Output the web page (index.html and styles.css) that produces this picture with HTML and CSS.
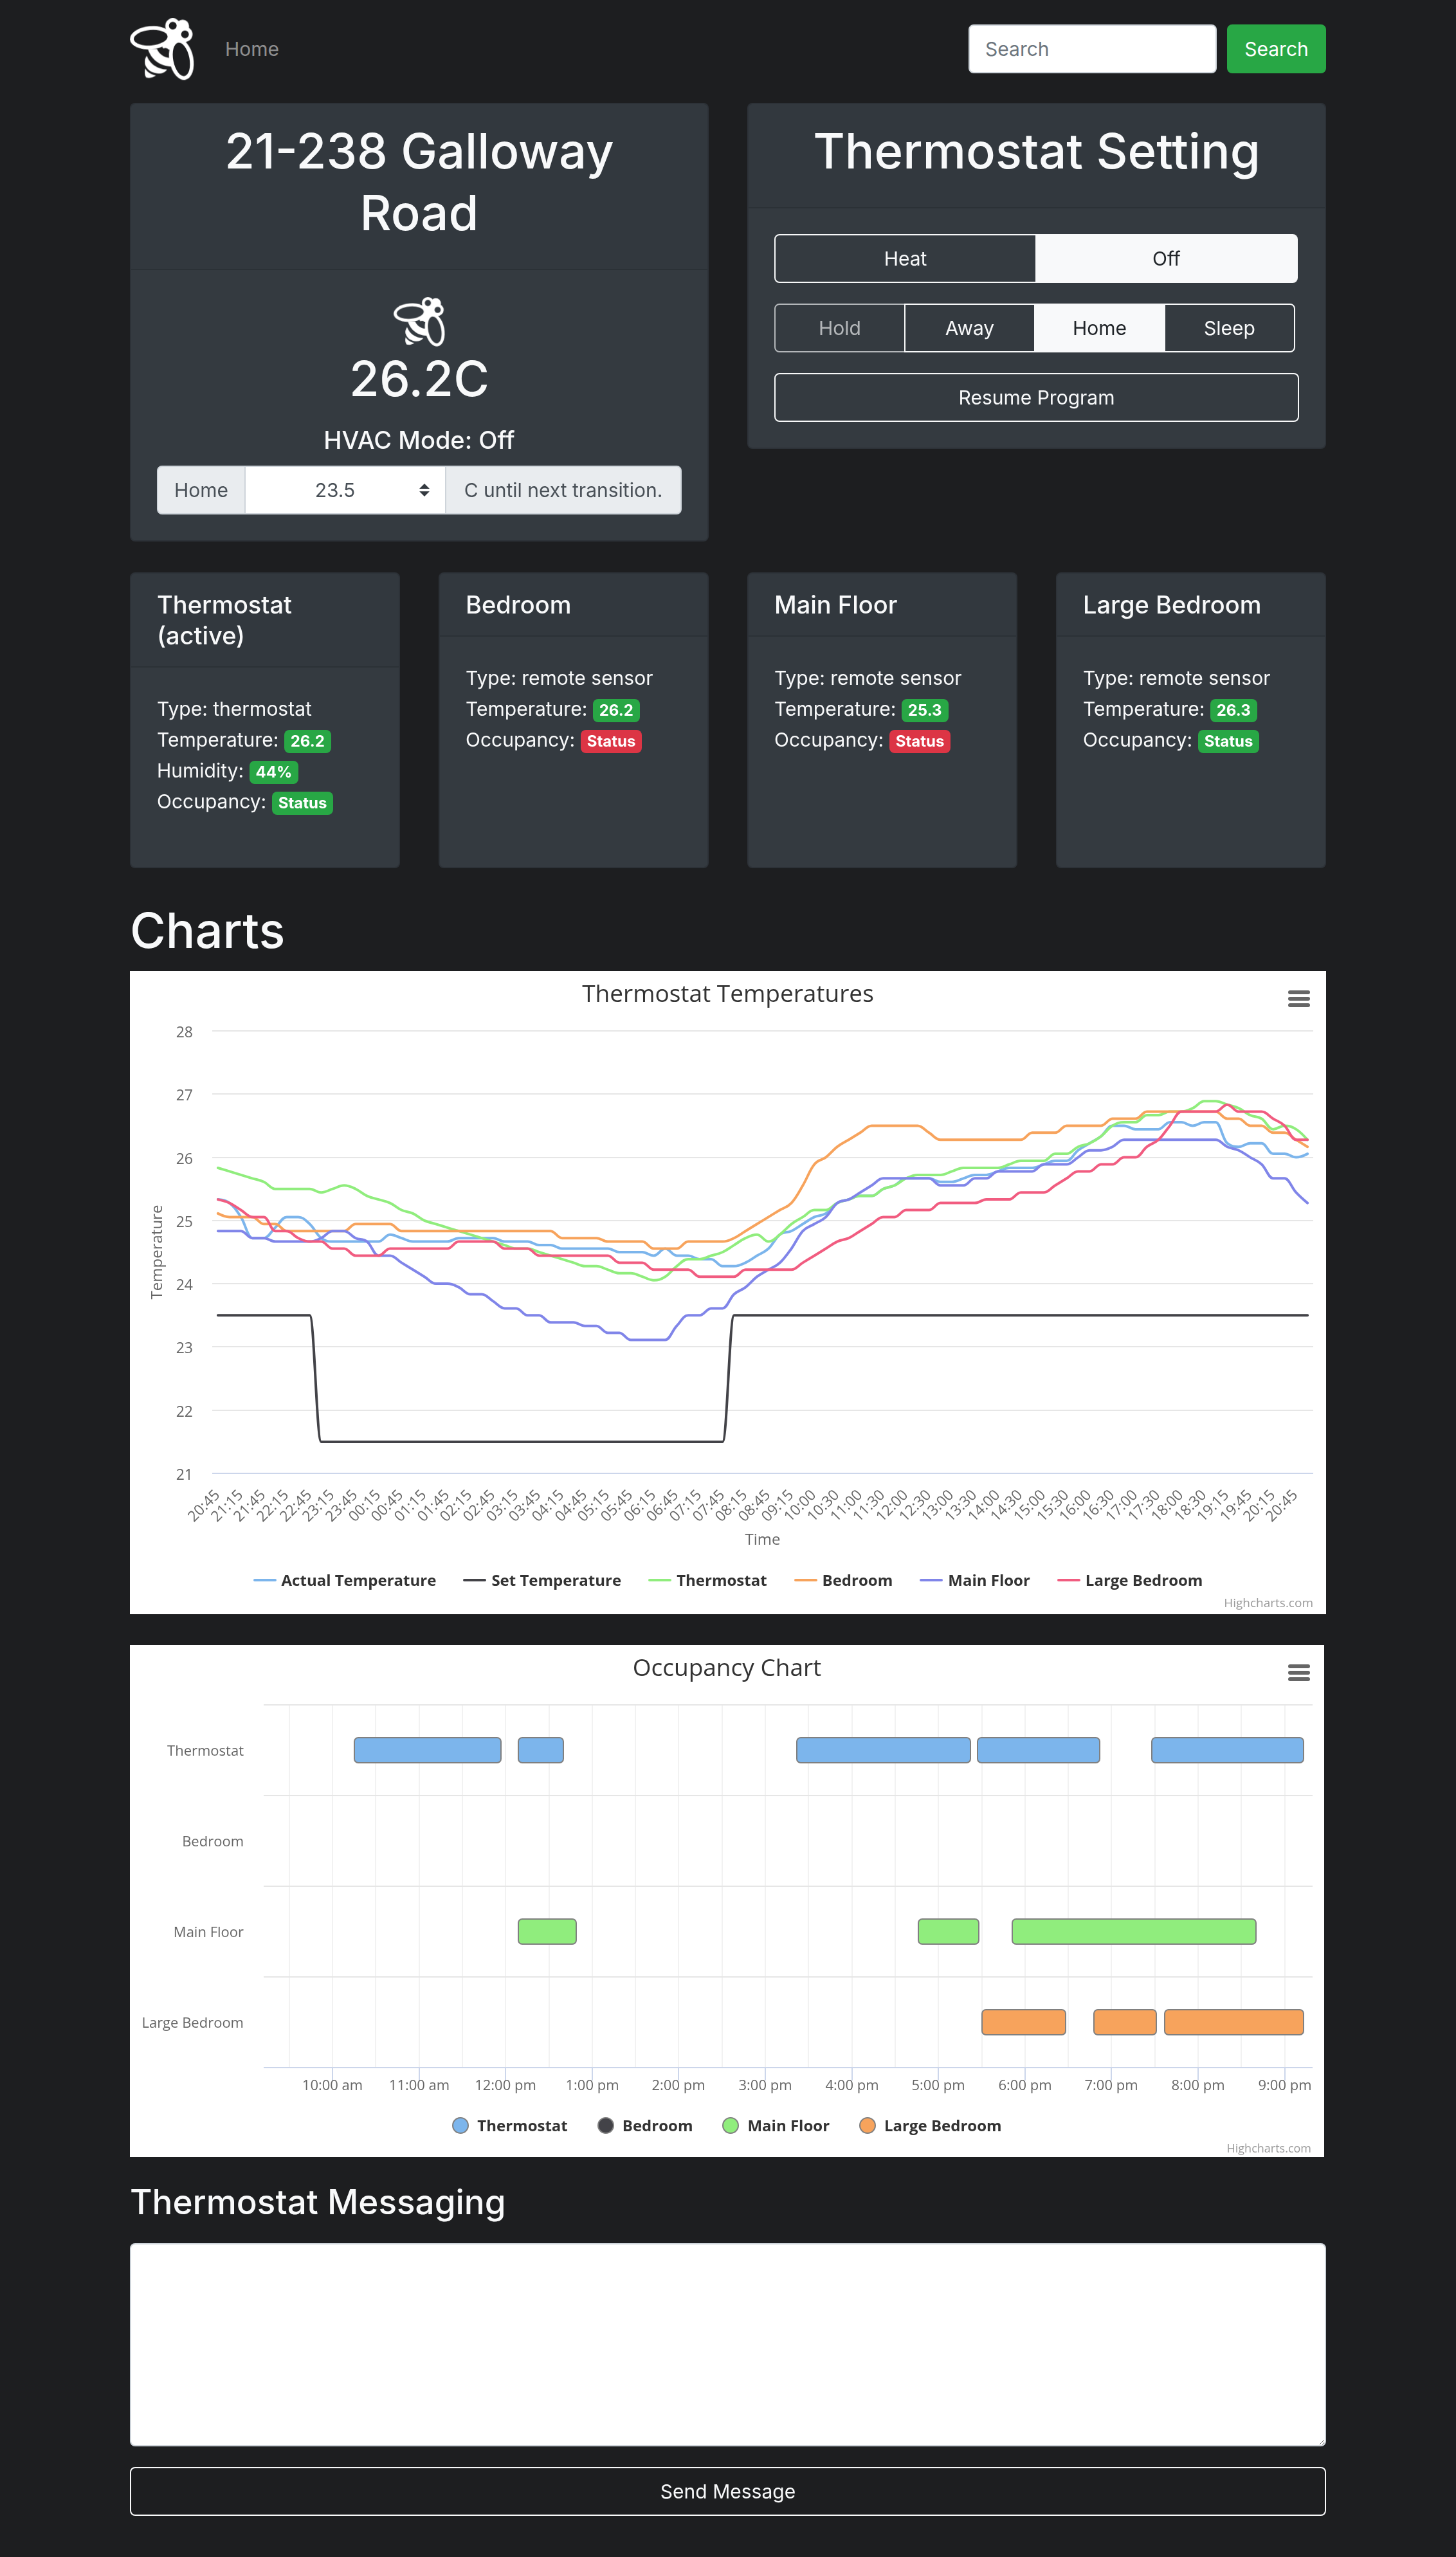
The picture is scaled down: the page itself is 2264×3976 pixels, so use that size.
FILE: index.html
```html
<!DOCTYPE html>
<html lang="en">
<head>
  <meta charset="utf-8">
  <meta name="viewport" content="width=device-width, initial-scale=1">
  <title>21-238 Galloway Road</title>
  <link rel="stylesheet" href="styles.css">
</head>
<body>
  <svg class="sprite" aria-hidden="true">
    <symbol id="bee" viewBox="36 46 300 300">
      <mask id="bee-holes" maskUnits="userSpaceOnUse" x="0" y="0" width="400" height="400">
        <rect width="400" height="400" fill="#fff"/>
        <ellipse cx="133" cy="144" rx="79" ry="36" transform="rotate(-5 133 144)"/>
        <ellipse cx="276" cy="245" rx="38" ry="79" transform="rotate(-11 276 245)"/>
        <circle cx="236" cy="88" r="18"/>
        <circle cx="293" cy="128" r="18"/>
      </mask>
      <g mask="url(#bee-holes)" fill="#fff">
        <ellipse cx="133" cy="144" rx="97" ry="54" transform="rotate(-5 133 144)"/>
        <ellipse cx="276" cy="245" rx="56" ry="97" transform="rotate(-11 276 245)"/>
        <circle cx="236" cy="88" r="35"/>
        <circle cx="293" cy="128" r="35"/>
        <circle cx="282" cy="90" r="30"/>
        <path d="M202 96L260 66L312 96L300 163L262 172L232 200L217 199Q207 187 192 194L186 186L214 150Z"/>
        <path d="M120 196C134 245 178 278 232 278L222 238C196 236 172 220 162 196Z"/>
        <path d="M115 228C126 262 162 292 209 292C192 320 142 314 120 291C102 272 100 248 115 228Z"/>
        <path d="M107 287C116 303 132 315 157 320C142 332 124 333 112 330C104 318 103 301 107 287Z"/>
      </g>
    </symbol>
  </svg>

  <div class="container">
    <header class="navbar">
      <a class="brand" href="#" aria-label="Dashboard"><svg class="bee"><use href="#bee"/></svg></a>
      <nav><a class="nav-link" href="#">Home</a></nav>
      <form class="search" role="search">
        <input class="field" type="search" placeholder="Search" aria-label="Search">
        <button class="btn btn-success" type="submit">Search</button>
      </form>
    </header>

    <main>
      <section class="grid halves">
        <article class="card">
          <header class="card-header centered"><h1>21-238 Galloway<br>Road</h1></header>
          <div class="card-body centered">
            <svg class="bee-small" aria-hidden="true"><use href="#bee"/></svg>
            <p class="reading">26.2C</p>
            <h5 class="mode">HVAC Mode: Off</h5>
            <div class="input-group">
              <label class="addon" for="target">Home</label>
              <select id="target" class="select">
                <option>23.0</option>
                <option selected>23.5</option>
                <option>24.0</option>
              </select>
              <span class="addon">C until next transition.</span>
            </div>
          </div>
        </article>

        <article class="card">
          <header class="card-header centered"><h1>Thermostat Setting</h1></header>
          <div class="card-body stack">
            <div class="btn-group two" role="group" aria-label="HVAC mode">
              <button class="btn btn-outline" type="button">Heat</button>
              <button class="btn btn-outline active" type="button" aria-pressed="true">Off</button>
            </div>
            <div class="btn-group four" role="group" aria-label="Comfort setting">
              <button class="btn btn-outline" type="button" disabled>Hold</button>
              <button class="btn btn-outline" type="button">Away</button>
              <button class="btn btn-outline active" type="button" aria-pressed="true">Home</button>
              <button class="btn btn-outline" type="button">Sleep</button>
            </div>
            <button class="btn btn-outline block" type="button">Resume Program</button>
          </div>
        </article>
      </section>

      <section class="grid quarters">
        <article class="card">
          <header class="card-header"><h5>Thermostat (active)</h5></header>
          <ul class="card-body facts">
            <li>Type: thermostat</li>
            <li>Temperature: <span class="badge ok">26.2</span></li>
            <li>Humidity: <span class="badge ok">44%</span></li>
            <li>Occupancy: <span class="badge ok">Status</span></li>
          </ul>
        </article>
        <article class="card">
          <header class="card-header"><h5>Bedroom</h5></header>
          <ul class="card-body facts">
            <li>Type: remote sensor</li>
            <li>Temperature: <span class="badge ok">26.2</span></li>
            <li>Occupancy: <span class="badge off">Status</span></li>
          </ul>
        </article>
        <article class="card">
          <header class="card-header"><h5>Main Floor</h5></header>
          <ul class="card-body facts">
            <li>Type: remote sensor</li>
            <li>Temperature: <span class="badge ok">25.3</span></li>
            <li>Occupancy: <span class="badge off">Status</span></li>
          </ul>
        </article>
        <article class="card">
          <header class="card-header"><h5>Large Bedroom</h5></header>
          <ul class="card-body facts">
            <li>Type: remote sensor</li>
            <li>Temperature: <span class="badge ok">26.3</span></li>
            <li>Occupancy: <span class="badge ok">Status</span></li>
          </ul>
        </article>
      </section>

      <section>
        <h1 class="section-title">Charts</h1>

        <figure class="chart">
          <figcaption>Thermostat Temperatures</figcaption>
          <button class="chart-menu" type="button" aria-label="Chart menu"><i></i><i></i><i></i></button>
          <svg id="temperatures" class="plot" viewBox="0 58 1860 862" role="img" aria-label="Thermostat temperatures by time"></svg>
          <ul class="legend lines">
            <li><i class="blue"></i>Actual Temperature</li>
            <li><i class="black"></i>Set Temperature</li>
            <li><i class="green"></i>Thermostat</li>
            <li><i class="orange"></i>Bedroom</li>
            <li><i class="purple"></i>Main Floor</li>
            <li><i class="red"></i>Large Bedroom</li>
          </ul>
          <a class="credits" href="#">Highcharts.com</a>
        </figure>

        <figure class="chart occupancy">
          <figcaption>Occupancy Chart</figcaption>
          <button class="chart-menu" type="button" aria-label="Chart menu"><i></i><i></i><i></i></button>
          <svg id="occupancy" class="plot" viewBox="0 58 1857 652" role="img" aria-label="Occupancy by room and time"></svg>
          <ul class="legend dots">
            <li><i class="blue"></i>Thermostat</li>
            <li><i class="black"></i>Bedroom</li>
            <li><i class="green"></i>Main Floor</li>
            <li><i class="orange"></i>Large Bedroom</li>
          </ul>
          <a class="credits" href="#">Highcharts.com</a>
        </figure>
      </section>

      <form class="messaging">
        <h3><label for="message">Thermostat Messaging</label></h3>
        <textarea id="message" class="field"></textarea>
        <button class="btn btn-outline block" type="submit">Send Message</button>
      </form>
    </main>
  </div>
  <script src="charts.js"></script>
</body>
</html>
```

FILE: styles.css
```css
* { box-sizing: border-box; }

body {
  margin: 0;
  background: #1d1e20;
  color: #f8f9fa;
  font: 400 30px/48px Inter, "Liberation Sans", sans-serif;
}

h1, h3, h5, p, ul, figure { margin: 0; padding: 0; }
ul { list-style: none; }
h1, .reading { font-size: 76px; line-height: 96px; font-weight: 500; }
h3 { font-size: 53px; line-height: 68px; font-weight: 500; }
h5 { font-size: 38px; line-height: 48px; font-weight: 500; }
button, input, select, textarea { font: inherit; }
.sprite { position: absolute; width: 0; height: 0; }

.container { max-width: 1920px; margin: 0 auto; padding: 0 30px 64px; }

/* Navigation */
.navbar { display: flex; align-items: center; padding: 26px 0 34px; }
.brand { display: flex; }
.bee { width: 100px; height: 100px; }
.nav-link { margin-left: 48px; color: rgba(255, 255, 255, .5); text-decoration: none; }
.search { display: flex; gap: 16px; margin-left: auto; }
.search .field { width: 386px; }

/* Controls */
.field {
  padding: 12px 24px;
  border: 2px solid #ced4da;
  border-radius: 8px;
  background: #fff;
  color: #495057;
}
.field::placeholder { color: #6c757d; opacity: 1; }
.btn {
  padding: 12px 24px;
  border: 2px solid transparent;
  border-radius: 8px;
  background: none;
  color: #f8f9fa;
}
.btn-success { min-width: 154px; background: #28a745; border-color: #28a745; color: #fff; }
.btn-outline { border-color: #f8f9fa; }
.btn-outline.active { background: #f8f9fa; color: #212529; }
.btn:disabled { opacity: .65; }
.block { width: 100%; }

.btn-group { display: flex; }
.btn-group .btn + .btn { margin-left: -2px; border-top-left-radius: 0; border-bottom-left-radius: 0; }
.btn-group .btn:not(:last-child) { border-top-right-radius: 0; border-bottom-right-radius: 0; }
.two .btn { width: 50%; flex: none; }
.four .btn { width: 25%; flex: none; }

.input-group { display: grid; grid-template-columns: 138px 1fr 368px; }
.addon {
  padding: 12px 0;
  border: 2px solid #ced4da;
  background: #e9ecef;
  color: #495057;
  text-align: center;
  white-space: nowrap;
}
.addon:first-child { border-radius: 8px 0 0 8px; }
.addon:last-child { border-radius: 0 8px 8px 0; }
.select {
  min-width: 0;
  margin: 0 -2px;
  padding: 12px 56px 12px 24px;
  border: 2px solid #ced4da;
  border-radius: 0;
  appearance: none;
  color: #495057;
  text-align: center;
  text-align-last: center;
  background: #fff url("data:image/svg+xml,%3Csvg xmlns='http://www.w3.org/2000/svg' viewBox='0 0 4 5'%3E%3Cpath fill='%23343a40' d='M2 0L0 2h4zm0 5L0 3h4z'/%3E%3C/svg%3E") no-repeat right 24px center / 16px 20px;
}

/* Cards */
.grid { display: grid; gap: 60px; margin-bottom: 48px; }
.halves { grid-template-columns: 1fr 1fr; align-items: start; }
.quarters { grid-template-columns: repeat(4, 1fr); }
.card {
  border: 2px solid rgba(0, 0, 0, .125);
  border-radius: 8px;
  background: #343a40;
}
.card-header {
  padding: 24px 40px;
  background: rgba(0, 0, 0, .03);
  border-bottom: 2px solid rgba(0, 0, 0, .125);
}
.card-header h1 { margin-bottom: 16px; }
.card-body { padding: 40px; }
.centered { text-align: center; }
.stack { display: grid; gap: 32px; }
.bee-small { display: block; width: 80px; height: 80px; margin: 0 auto; }
.mode { margin: 24px 0 16px; }
.facts { padding-bottom: 78px; }

.badge {
  display: inline-block;
  padding: 6px 10px;
  border-radius: 8px;
  font-size: 24px;
  line-height: 24px;
  font-weight: 700;
  color: #fff;
}
.ok { background: #28a745; }
.off { background: #dc3545; }

/* Charts */
.section-title { margin-bottom: 16px; }
.chart {
  position: relative;
  padding: 10px 0 6px;
  background: #fff;
  color: #333;
  font-family: "Open Sans", "Noto Sans", sans-serif;
  margin-bottom: 48px;
}
.occupancy { margin: 0 3px 36px 0; padding-bottom: 2px; }
.chart figcaption { font-size: 37px; line-height: 48px; text-align: center; }
.chart-menu {
  position: absolute;
  top: 20px;
  right: 15px;
  display: grid;
  gap: 4px;
  align-content: center;
  width: 54px;
  height: 46px;
  padding: 0 10px;
  border: 0;
  background: none;
}
.occupancy .chart-menu { right: 12px; }
.chart-menu i { height: 6px; border-radius: 3px; background: #666; }
.plot { display: block; width: 100%; height: auto; font-size: 22px; }
#temperatures { font-size: 23px; }
.plot text { fill: #666; }
.plot .axis-title { font-size: 24px; }
.grid-line { stroke: #e6e6e6; stroke-width: 2; }
.minor-line { stroke: #f2f2f2; stroke-width: 2; }
.axis-line { stroke: #ccd6eb; stroke-width: 2; }
.series { fill: none; stroke-width: 4; stroke-linecap: round; stroke-linejoin: round; }
.bar { stroke: #808080; stroke-width: 2; }

.legend { display: flex; flex-wrap: wrap; justify-content: center; gap: 0 42px; margin-top: 11px; font-size: 24px; line-height: 32px; font-weight: 700; }
.dots { gap: 0 46px; margin-top: 21px; }
.legend li { display: flex; align-items: center; }
.lines i { width: 36px; height: 4px; margin-right: 8px; border-radius: 2px; }
.dots i { width: 26px; height: 26px; margin-right: 13px; border: 2px solid #808080; border-radius: 50%; }
.blue { background: #7cb5ec; }
.black { background: #434348; }
.green { background: #90ed7d; }
.orange { background: #f7a35c; }
.purple { background: #8085e9; }
.red { background: #f15c80; }
.credits { display: block; margin: 7px 20px 0 0; color: #999; font-size: 19px; line-height: 24px; text-align: right; text-decoration: none; }
.occupancy .credits { font-size: 18px; }

/* Messaging */
.messaging { display: grid; }
.messaging h3 { margin-bottom: 30px; }
.messaging textarea { height: 316px; margin-bottom: 32px; resize: vertical; }
```

FILE: charts.js
```js
(function () {
  var NS = 'http://www.w3.org/2000/svg';

  function add(parent, name, attrs, text) {
    var el = document.createElementNS(NS, name);
    for (var key in attrs) el.setAttribute(key, attrs[key]);
    if (text) el.textContent = text;
    parent.appendChild(el);
    return el;
  }

  function line(svg, cls, x1, y1, x2, y2) {
    add(svg, 'line', { 'class': cls, x1: x1, y1: y1, x2: x2, y2: y2 });
  }

  // "76.7*4" stands for four equal readings in a row
  function expand(text) {
    var out = [];
    text.split(' ').forEach(function (item) {
      var part = item.split('*');
      for (var i = 0; i < (part[1] || 1); i++) out.push(+part[0]);
    });
    return out;
  }

  // Smooth curve whose control points never overshoot the data
  function spline(pts) {
    var d = 'M' + pts[0][0].toFixed(1) + ' ' + pts[0][1].toFixed(1);
    var rx = pts[0][0], ry = pts[0][1];
    for (var i = 1; i < pts.length; i++) {
      var x = pts[i][0], y = pts[i][1], lx = x, ly = y, nrx = x, nry = y;
      if (i < pts.length - 1) {
        var px = pts[i - 1][0], py = pts[i - 1][1], nx = pts[i + 1][0], ny = pts[i + 1][1];
        lx = (1.5 * x + px) / 2.5;
        ly = (1.5 * y + py) / 2.5;
        nrx = (1.5 * x + nx) / 2.5;
        nry = (1.5 * y + ny) / 2.5;
        var fix = (nry - ly) * (nrx - x) / (nrx - lx) + y - nry;
        ly += fix;
        nry += fix;
        if (ly > py && ly > y) { ly = Math.max(py, y); nry = 2 * y - ly; }
        else if (ly < py && ly < y) { ly = Math.min(py, y); nry = 2 * y - ly; }
        if (nry > ny && nry > y) { nry = Math.max(ny, y); ly = 2 * y - nry; }
        else if (nry < ny && nry < y) { nry = Math.min(ny, y); ly = 2 * y - nry; }
      }
      d += 'C' + [rx, ry, lx, ly, x, y].map(function (n) { return n.toFixed(1); }).join(' ');
      rx = nrx;
      ry = nry;
    }
    return d;
  }

  /* Temperatures: readings in Fahrenheit every 15 minutes, axis in Celsius */
  var readings = [
    ['#7cb5ec', '77.6 77.5 77.1 76.5*2 76.8 77.1*2 76.9 76.5 76.4*5 76.6 76.5 76.4*4 76.5*4 76.4*3 76.3*2 76.2*5 76.1*3 76 76.2 76*2 75.9*2 75.7*2 75.8 76 76.2 76.6 76.7 76.9 77.1 77.2 77.5 77.6 77.7*2 77.9 78 78.2*3 78.1*2 78.2 78.3*2 78.4 78.5*3 78.6 78.7*2 79 79.2 79.4 79.7*2 79.6*3 79.8*2 79.7 79.8*2 79.2 79.1 79.2*2 78.9*2 78.8 78.9'],
    ['#434348', '74.3*9 70.7*36 74.3*51'],
    ['#90ed7d', '78.5 78.4 78.3 78.2 78.1 77.9*4 77.8 77.9 78 77.9 77.7 77.6 77.5 77.3 77.2 77 76.9 76.8 76.7 76.6 76.5 76.4 76.3 76.2*2 76.1 76 75.9 75.8 75.7*2 75.6 75.5*2 75.4 75.3 75.4 75.7 75.9*2 76 76.1 76.3 76.5 76.6 76.4 76.6 76.9 77.1 77.3*2 77.5 77.6 77.7*2 77.9 78 78.2 78.3*3 78.4 78.5*4 78.6 78.7*3 78.9*2 79.1 79.2 79.4 79.7 79.8*2 80*2 80.1*2 80.2 80.4*2 80.3 80.2 80 79.9 79.6 79.7 79.6 79.3'],
    ['#f7a35c', '77.2 77.1*3 76.9*2 76.7*6 76.9*4 76.7*14 76.5*4 76.4*4 76.2*3 76.4*4 76.5 76.7 76.9 77.1 77.3 77.5 78 78.6 78.8 79.1 79.3 79.5 79.7*5 79.5 79.3*8 79.5*3 79.7*4 79.9*3 80.1*7 79.9*2 79.7*2 79.5*2 79.3 79.1'],
    ['#8085e9', '76.7*3 76.5*2 76.4*4 76.5 76.7*2 76.5 76.4 76*2 75.8 75.6 75.4 75.2*2 75.1 74.9*2 74.7 74.5*2 74.3*2 74.1*3 74*2 73.8*2 73.6*4 74 74.3*2 74.5*2 74.9 75.1 75.4 75.6 75.8 76.2 76.7 76.9 77.1 77.5 77.6 77.8 78 78.2*5 78*3 78.2*2 78.4*4 78.6*3 78.8 79*2 79.1 79.3*9 79.1 79 78.8 78.6 78.2*2 77.8 77.5'],
    ['#f15c80', '77.6 77.5 77.3 77.1*2 76.7*2 76.5 76.4*2 76.2*2 76*3 76.2*6 76.4*4 76.2*3 76*7 75.8*3 75.6*4 75.4*4 75.6*5 75.8 76 76.2 76.4 76.5 76.7 76.9 77.1*2 77.3*3 77.5*4 77.6*3 77.8*3 78 78.2 78.4*2 78.6*2 78.8*2 79.1 79.3 79.7 80.1*4 80.3 80.1*3 79.9 79.7 79.3*2']
  ];
  var svg = document.getElementById('temperatures');
  var left = 128, right = 1840, top = 93, bottom = 781, step = (right - left) / 96;
  function tempY(c) { return bottom - (c - 21) * (bottom - top) / 7; }

  for (var t = 21; t <= 28; t++) {
    var gy = Math.round(tempY(t));
    line(svg, t === 21 ? 'axis-line' : 'grid-line', left, gy, right, gy);
    add(svg, 'text', { x: 98, y: gy + 10, 'text-anchor': 'end' }, String(t));
  }

  var times = [];
  function range(startMinutes, count) {
    for (var i = 0; i < count; i++) {
      var m = (startMinutes + i * 30) % 1440;
      times.push(('0' + Math.floor(m / 60)).slice(-2) + ':' + ('0' + m % 60).slice(-2));
    }
  }
  range(20 * 60 + 45, 26);
  range(10 * 60, 18);
  range(19 * 60 + 15, 4);
  times.forEach(function (label, i) {
    var x = Math.round(left + (i * 2 + .5) * step) + 4, y = 816;
    add(svg, 'text', { x: x, y: y, 'text-anchor': 'end', transform: 'rotate(-45 ' + x + ' ' + y + ')' }, label);
  });

  add(svg, 'text', { 'class': 'axis-title', x: 984, y: 892, 'text-anchor': 'middle' }, 'Time');
  add(svg, 'text', { 'class': 'axis-title', x: 50, y: 437, 'text-anchor': 'middle', transform: 'rotate(-90 50 437)' }, 'Temperature');

  readings.forEach(function (row) {
    var pts = expand(row[1]).map(function (f, i) {
      return [left + (i + .5) * step, tempY((f - 32) / 1.8)];
    });
    add(svg, 'path', { 'class': 'series', stroke: row[0], d: spline(pts) });
  });

  /* Occupancy: one row per room, spans as start and end times */
  var rooms = [
    ['Thermostat', '#7cb5ec', ['10:15-11:57', '12:09-12:40', '15:22-17:22', '17:27-18:52', '19:28-21:13']],
    ['Bedroom', '#434348', []],
    ['Main Floor', '#90ed7d', ['12:09-12:49', '16:46-17:28', '17:51-20:40']],
    ['Large Bedroom', '#f7a35c', ['17:30-18:28', '18:48-19:31', '19:37-21:13']]
  ];
  svg = document.getElementById('occupancy');
  left = 208; right = 1839; top = 93; bottom = 657;
  var rowHeight = (bottom - top) / rooms.length;
  function hourX(h) { return 315 + (h - 10) * 134.6; }
  function parse(s) { var p = s.split(':'); return +p[0] + p[1] / 60; }

  for (var h = 9.5; h <= 21; h += .5) {
    var vx = Math.round(hourX(h));
    line(svg, 'minor-line', vx, top, vx, bottom);
  }
  for (var r = 0; r < rooms.length; r++) {
    line(svg, 'grid-line', left, top + r * rowHeight, right, top + r * rowHeight);
  }
  line(svg, 'axis-line', left, bottom, right, bottom);
  for (h = 10; h <= 21; h++) {
    var tx = Math.round(hourX(h));
    line(svg, 'axis-line', tx, bottom, tx, bottom + 20);
    add(svg, 'text', { x: tx, y: 692, 'text-anchor': 'middle' }, (h > 12 ? h - 12 : h) + ':00 ' + (h < 12 ? 'am' : 'pm'));
  }
  rooms.forEach(function (room, i) {
    var cy = top + (i + .5) * rowHeight;
    add(svg, 'text', { x: 177, y: cy + 8, 'text-anchor': 'end' }, room[0]);
    room[2].forEach(function (span) {
      var ends = span.split('-').map(parse), x = Math.round(hourX(ends[0]));
      add(svg, 'rect', { 'class': 'bar', x: x, y: Math.round(cy) - 20, width: Math.round(hourX(ends[1])) - x, height: 39, rx: 6, fill: room[1] });
    });
  });
})();
```
